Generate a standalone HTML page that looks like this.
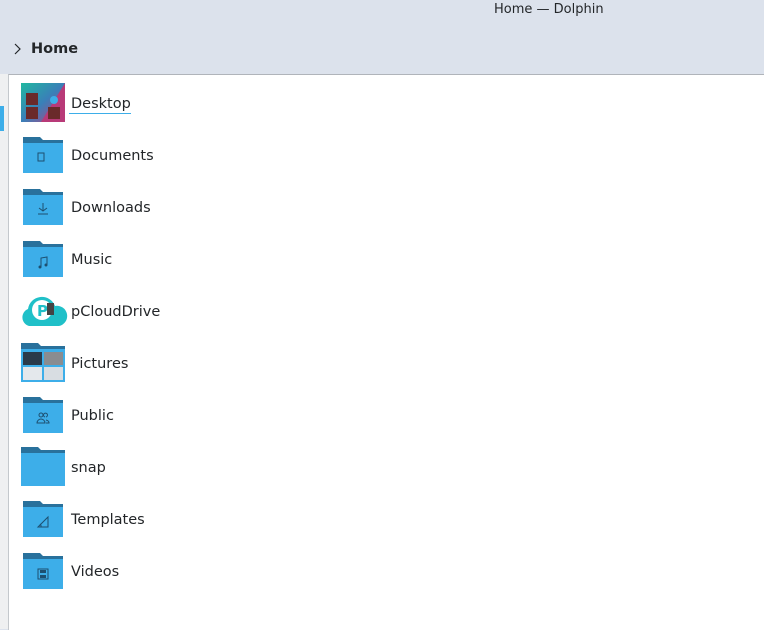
<!DOCTYPE html>
<html><head><meta charset="utf-8"><style>
body{margin:0;width:764px;height:629px;overflow:hidden;background:#dce2ec;font-family:"Liberation Sans","DejaVu Sans",sans-serif;position:relative}
.t{position:absolute;font-family:"DejaVu Sans",sans-serif;color:#232629}
.panel{position:absolute;left:8px;top:74px;width:756px;height:555px;background:#fff;border-left:1px solid #c4c8cc;border-top:1px solid #b0b4ba}
.side{position:absolute;left:0;top:74px;width:8px;height:555px;background:#eff0f1}
.row{position:absolute;left:71px;font-size:14.5px;font-family:"DejaVu Sans",sans-serif;color:#232629}
svg{position:absolute}
</style></head><body>
<div class="t" style="left:494px;top:2px;font-size:13px">Home — Dolphin</div>
<svg style="left:12px;top:42px" width="10" height="14"><path d="M3 2 L8 7 L3 12" fill="none" stroke="#232629" stroke-width="1.2"/></svg>
<div class="t" style="left:31px;top:41px;font-size:14.5px;font-weight:bold">Home</div>
<div class="side"></div>
<div style="position:absolute;left:0;top:106px;width:4px;height:25px;background:#3daee9"></div>
<div class="panel"></div>
<svg width="0" height="0"><defs><g id="f"><path d="M0 0H17L20 3H40V8H0Z" fill="#29719c"/><rect x="0" y="6" width="40" height="30" fill="#3daee9"/></g></defs></svg>
<svg style="left:21px;top:83px" width="44" height="40"><defs><linearGradient id="g" x1="0" y1="0" x2="1" y2="1"><stop offset="0" stop-color="#20b8a0"/><stop offset="0.5" stop-color="#3a7fb8"/><stop offset="1" stop-color="#c03a7a"/></linearGradient></defs><rect width="44" height="39" fill="url(#g)"/><path d="M44 0V39H20Z" fill="#b83a78"/><rect x="5" y="10" width="12" height="12" fill="#6a2a2a"/><rect x="5" y="24" width="12" height="12" fill="#6a2a2a"/><rect x="27" y="24" width="12" height="12" fill="#6a2a2a"/><circle cx="33" cy="17" r="4" fill="#3daee9"/></svg>
<div class="row" style="top:96px">Desktop</div>
<div style="position:absolute;left:69px;top:113px;width:62px;height:1px;background:#3daee9"></div>
<svg style="left:23px;top:137px" width="40" height="36"><use href="#f"/><path d="M15 16h6v8h-6z" fill="none" stroke="#1d4f70" stroke-width="1"/></svg>
<div class="row" style="top:148px">Documents</div>
<svg style="left:23px;top:189px" width="40" height="36"><use href="#f"/><path d="M20 14v8M16 19l4 3 4-3M15 25h10" fill="none" stroke="#1d4f70"/></svg>
<div class="row" style="top:200px">Downloads</div>
<svg style="left:23px;top:241px" width="40" height="36"><use href="#f"/><path d="M18 26V17l6-1v8" fill="none" stroke="#1d4f70"/><circle cx="17" cy="26" r="1.5" fill="#1d4f70"/><circle cx="23" cy="24" r="1.5" fill="#1d4f70"/></svg>
<div class="row" style="top:252px">Music</div>
<svg style="left:19px;top:295px" width="50" height="32"><path d="M10 31a9 9 0 0 1-1-17 14 14 0 0 1 27-3 10 10 0 0 1 4 20z" fill="#20c0c8"/><circle cx="23" cy="15" r="10" fill="#fff"/><text x="18" y="21" font-size="15" font-weight="bold" fill="#20c0c8" font-family="DejaVu Sans">P</text><rect x="28" y="8" width="7" height="12" fill="#444"/></svg>
<div class="row" style="top:304px">pCloudDrive</div>
<svg style="left:21px;top:343px" width="44" height="40"><path d="M0 0H17L20 3H44V8H0Z" fill="#29719c"/><rect x="0" y="6" width="44" height="33" fill="#3daee9"/><rect x="2" y="9" width="19" height="13" fill="#2a3a4a"/><rect x="23" y="9" width="19" height="13" fill="#8a8c90"/><rect x="2" y="24" width="19" height="13" fill="#e4e8ec"/><rect x="23" y="24" width="19" height="13" fill="#d8dde2"/></svg>
<div class="row" style="top:356px">Pictures</div>
<svg style="left:23px;top:397px" width="40" height="36"><use href="#f"/><circle cx="18" cy="18" r="2" fill="none" stroke="#1d4f70"/><path d="M14 26a4 4 0 0 1 8 0zM22 20a2 2 0 1 1 1 0M23 23a4 3 0 0 1 3 3h-3" fill="none" stroke="#1d4f70"/></svg>
<div class="row" style="top:408px">Public</div>
<svg style="left:21px;top:447px" width="44" height="40"><path d="M0 0H17L20 3H44V8H0Z" fill="#29719c"/><rect x="0" y="6" width="44" height="33" fill="#3daee9"/></svg>
<div class="row" style="top:460px">snap</div>
<svg style="left:23px;top:501px" width="40" height="36"><use href="#f"/><path d="M15 26h10V16z M18 26a3 3 0 0 0-1-3" fill="none" stroke="#1d4f70"/></svg>
<div class="row" style="top:512px">Templates</div>
<svg style="left:23px;top:553px" width="40" height="36"><use href="#f"/><rect x="15" y="16" width="10" height="10" fill="none" stroke="#1d4f70"/><path d="M17 17h6v3h-6zM17 22h6v3h-6z" fill="#1d4f70"/></svg>
<div class="row" style="top:564px">Videos</div>
</body></html>
